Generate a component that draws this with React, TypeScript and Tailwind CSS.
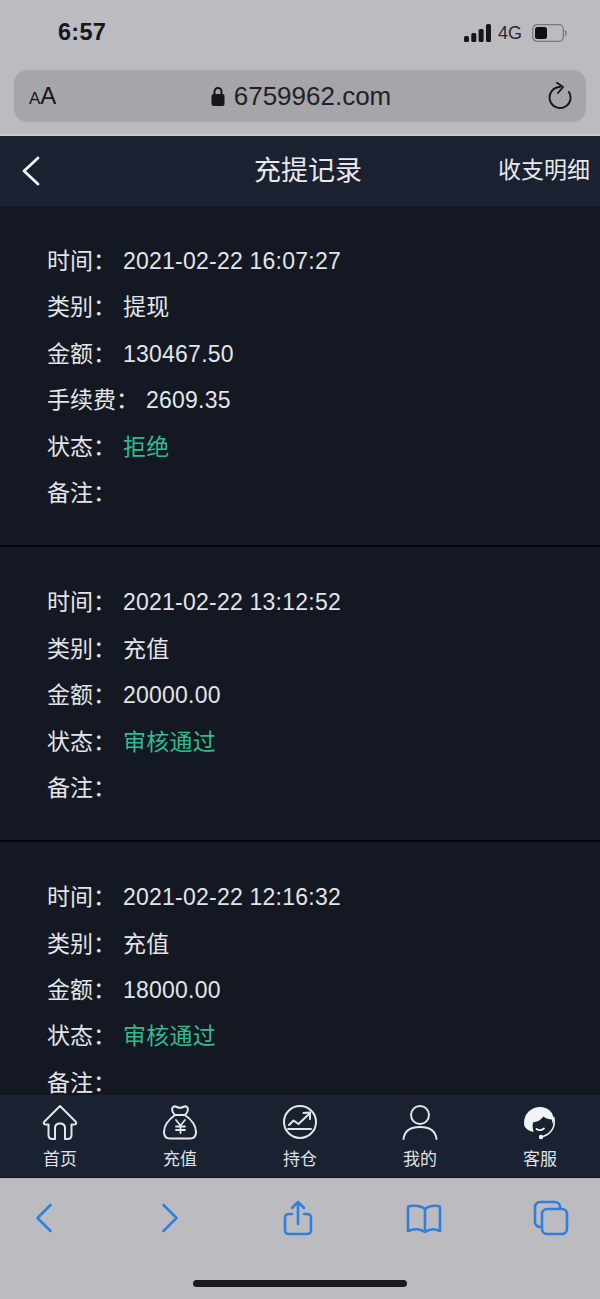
const cjk = "font-['Liberation_Sans','Noto_Sans_CJK_SC',sans-serif]";

type Field = { label: string; value?: string; accent?: boolean };

const records: Field[][] = [
  [
    { label: '时间', value: '2021-02-22 16:07:27' },
    { label: '类别', value: '提现' },
    { label: '金额', value: '130467.50' },
    { label: '手续费', value: '2609.35' },
    { label: '状态', value: '拒绝', accent: true },
    { label: '备注' },
  ],
  [
    { label: '时间', value: '2021-02-22 13:12:52' },
    { label: '类别', value: '充值' },
    { label: '金额', value: '20000.00' },
    { label: '状态', value: '审核通过', accent: true },
    { label: '备注' },
  ],
  [
    { label: '时间', value: '2021-02-22 12:16:32' },
    { label: '类别', value: '充值' },
    { label: '金额', value: '18000.00' },
    { label: '状态', value: '审核通过', accent: true },
    { label: '备注' },
  ],
];

function HomeIcon() {
  return (
    <svg width="36" height="36" viewBox="0 0 36 36" fill="none" stroke="#e4e6ea" strokeWidth="2" strokeLinejoin="round" strokeLinecap="round">
      <path d="M18 2 L34 18 Q35 20.5 32 20.5 L29.5 20.5 L29.5 31 Q29.5 35 25.5 35 L23 35 L23 24 Q23 19.5 18 19.5 Q13 19.5 13 24 L13 35 L10.5 35 Q6.5 35 6.5 31 L6.5 20.5 L4 20.5 Q1 20.5 2 18 Z" />
    </svg>
  );
}

function BagIcon() {
  return (
    <svg width="36" height="36" viewBox="0 0 36 36" fill="none" stroke="#e4e6ea" strokeWidth="2" strokeLinejoin="round" strokeLinecap="round">
      <path d="M13 11 Q9 7 10.5 3.5 Q12 1.5 15 3 Q18 4.5 21 3 Q24 1.5 25.5 3.5 Q27 7 23 11 Q34 19 34 28 Q34 34.5 28 34.5 L8 34.5 Q2 34.5 2 28 Q2 19 13 11 Z" />
      <path d="M13 11 L23 11" />
      <path d="M14 16 L18.5 21.5 L23 16 M18.5 21.5 L18.5 29 M14 22.5 L23 22.5 M14 26 L23 26" strokeWidth="1.8" />
    </svg>
  );
}

function ChartIcon() {
  return (
    <svg width="36" height="36" viewBox="0 0 36 36" fill="none" stroke="#e4e6ea" strokeWidth="2" strokeLinejoin="round" strokeLinecap="round">
      <circle cx="18" cy="18" r="16" />
      <path d="M7 21 L11.5 16.5 L16.5 20 L27.5 9.5" />
      <path d="M21.5 9 L28 8.5 L28 15" />
      <path d="M6 25 L29 25" />
    </svg>
  );
}

function UserIcon() {
  return (
    <svg width="36" height="36" viewBox="0 0 36 36" fill="none" stroke="#e4e6ea" strokeWidth="2" strokeLinecap="round">
      <circle cx="18" cy="11" r="9" />
      <path d="M1.5 35 Q3 23 18 23 Q33 23 34.5 35" />
    </svg>
  );
}

function AgentIcon() {
  return (
    <svg width="36" height="36" viewBox="0 0 36 36">
      <path d="M2 19 C2 9 10 3 18 3 C26 3 31 8 32 16 L30 20 L22 28 L12 28 C6 27 2 24 2 19 Z" fill="#f2f3f5" />
      <path d="M11 18.5 C15 18 19 16 21.5 12.5 C24 15 27 15 30 15.5 L31 29 L12 29.5 C11 26 10 22 11 18.5 Z" fill="#1a2130" />
      <path d="M14.5 25 Q18 27.5 22 24.5" fill="none" stroke="#f2f3f5" strokeWidth="1.8" strokeLinecap="round" />
      <path d="M31.5 13 C34 23 29 30 20 33" fill="none" stroke="#f2f3f5" strokeWidth="1.8" />
      <circle cx="19" cy="33" r="2.2" fill="#f2f3f5" />
    </svg>
  );
}

const tabs = [
  { label: '首页', icon: <HomeIcon /> },
  { label: '充值', icon: <BagIcon /> },
  { label: '持仓', icon: <ChartIcon /> },
  { label: '我的', icon: <UserIcon /> },
  { label: '客服', icon: <AgentIcon /> },
];

function SafariIcon({ children }: { children: React.ReactNode }) {
  return (
    <svg width="36" height="36" viewBox="0 0 36 36" fill="none" stroke="#2f80de" strokeWidth="2.6" strokeLinecap="round" strokeLinejoin="round">
      {children}
    </svg>
  );
}

export default function App() {
  return (
    <div className={`flex flex-col w-[600px] h-[1299px] overflow-hidden bg-[#131823] ${cjk}`}>
      {/* phone status bar */}
      <div className="h-[70px] bg-[#bcbbc0] flex items-center justify-between pl-[58px] pr-[33px] shrink-0">
        <span className="text-[23.5px] font-semibold text-[#17171a] tracking-[0.3px] -mt-[4px]">6:57</span>
        <div className="flex items-center gap-[7px] -mt-[5px]">
          <svg width="27" height="18" viewBox="0 0 27 18" fill="#17171a">
            <rect x="0" y="12" width="5" height="6" rx="1.5" />
            <rect x="7.3" y="9" width="5" height="9" rx="1.5" />
            <rect x="14.6" y="5" width="5" height="13" rx="1.5" />
            <rect x="22" y="0" width="5" height="18" rx="1.5" />
          </svg>
          <span className="text-[18px] leading-none text-[#2a2a2e]">4G</span>
          <svg className="ml-[3px]" width="35" height="18" viewBox="0 0 35 18" fill="none">
            <rect x="0.7" y="0.7" width="30.6" height="16.6" rx="4.5" stroke="#77767b" strokeWidth="1.2" />
            <rect x="3" y="3" width="12" height="12" rx="2.5" fill="#0f0f12" />
            <path d="M33 6.5 Q35 9 33 11.5" stroke="#77767b" strokeWidth="1.4" />
          </svg>
        </div>
      </div>

      {/* address bar */}
      <div className="h-[66px] bg-[#bcbbc0] px-[14px] border-b-2 border-[#c9c8cc] shrink-0">
        <div className="h-[52px] rounded-[14px] bg-[#a6a5aa] grid grid-cols-[1fr_auto_1fr] items-center pl-[15px] pr-[14px]">
          <span className="text-[#17171a] leading-none">
            <span className="text-[17px]">A</span>
            <span className="text-[24px]">A</span>
          </span>
          <div className="flex items-center gap-[9px] ml-[1px]">
            <svg width="14" height="20" viewBox="0 0 14 20" fill="#17171a">
              <path d="M3.5 9 V5.5 a3.5 3.5 0 0 1 7 0 V9" fill="none" stroke="#17171a" strokeWidth="2" />
              <rect x="0.5" y="8" width="13" height="12" rx="2" />
            </svg>
            <span className="text-[26px] leading-none text-[#222226]">6759962.com</span>
          </div>
          <svg className="justify-self-end" width="24" height="28" viewBox="0 0 24 28" fill="none" stroke="#17171a" strokeWidth="1.9" strokeLinecap="round" strokeLinejoin="round">
            <path d="M21 10 A10.5 10.5 0 1 1 12 5" />
            <path d="M9 0.8 L15 5 L10 11" />
          </svg>
        </div>
      </div>

      {/* page header */}
      <header className="h-[70px] bg-[#1a2130] grid grid-cols-[233px_108px_1fr] items-center pl-[21px] pr-[10px] shrink-0">
        <svg width="20" height="30" viewBox="0 0 20 30" fill="none" stroke="#f2f3f5" strokeWidth="2.8" strokeLinecap="round" strokeLinejoin="round">
          <path d="M17 2 L3 15 L17 28" />
        </svg>
        <h1 className="text-[27px] font-normal text-[#e8e9ec] whitespace-nowrap">充提记录</h1>
        <span className="text-[23px] text-[#e8e9ec] justify-self-end whitespace-nowrap -mt-[2px]">收支明细</span>
      </header>

      {/* record list */}
      <main className="flex-1 overflow-hidden">
        {records.map((record, i) => (
          <section key={i} className="px-[47px] pt-[32px] pb-[29px] border-b-2 border-[#05070c]">
            {record.map((f) => (
              <div key={f.label} className="h-[46.4px] leading-[46.4px] text-[23px] whitespace-nowrap text-[#e3e5e9]">
                <span>{f.label}：</span>
                {f.value && (
                  <span className={`ml-[7px] tracking-[0.23px] ${f.accent ? 'text-[#2fbb8f]' : ''}`}>{f.value}</span>
                )}
              </div>
            ))}
          </section>
        ))}
      </main>

      {/* tab bar */}
      <nav className="h-[84px] bg-[#1a2130] border-t border-[#10141e] border-b border-b-[#0c0f16] grid grid-cols-5 shrink-0">
        {tabs.map((t) => (
          <div key={t.label} className="flex flex-col items-center pt-[9px]">
            {t.icon}
            <span className="text-[17px] leading-[20px] mt-[10px] text-[#dfe1e5]">{t.label}</span>
          </div>
        ))}
      </nav>

      {/* safari toolbar */}
      <div className="h-[121px] bg-[#bcbbc0] flex flex-col items-center shrink-0">
        <div className="w-full grid grid-cols-5 pt-[22px]">
          <div className="flex justify-center pr-[32px]">
            <SafariIcon>
              <path d="M24.5 5 L11.5 18 L24.5 31" />
            </SafariIcon>
          </div>
          <div className="flex justify-center pr-[20px]">
            <SafariIcon>
              <path d="M11.5 5 L24.5 18 L11.5 31" />
            </SafariIcon>
          </div>
          <div className="flex justify-center pr-[3px]">
            <SafariIcon>
              <path d="M11 14 L8 14 Q4 14 4 18 L4 30 Q4 34 8 34 L26 34 Q30 34 30 30 L30 18 Q30 14 26 14 L23 14" />
              <path d="M17 24 L17 2 M11 8 L17 2 L23 8" />
            </SafariIcon>
          </div>
          <div className="flex justify-center pl-[8px]">
            <SafariIcon>
              <path d="M19 31 V9 Q14 5 4 6 Q2 6 2 8 L2 31 Q12 27 19 32 Q26 27 34 31 L34 8 Q34 6 32 6 Q24 5 19 9" />
            </SafariIcon>
          </div>
          <div className="flex justify-center pl-[22px]">
            <SafariIcon>
              <rect x="2" y="2" width="25" height="25" rx="5" />
              <rect x="9" y="9" width="25" height="25" rx="5" fill="#bcbbc0" />
            </SafariIcon>
          </div>
        </div>
        <div className="w-[214px] h-[7px] rounded-full bg-[#1a1a1c] mt-[44px]" />
      </div>
    </div>
  );
}
